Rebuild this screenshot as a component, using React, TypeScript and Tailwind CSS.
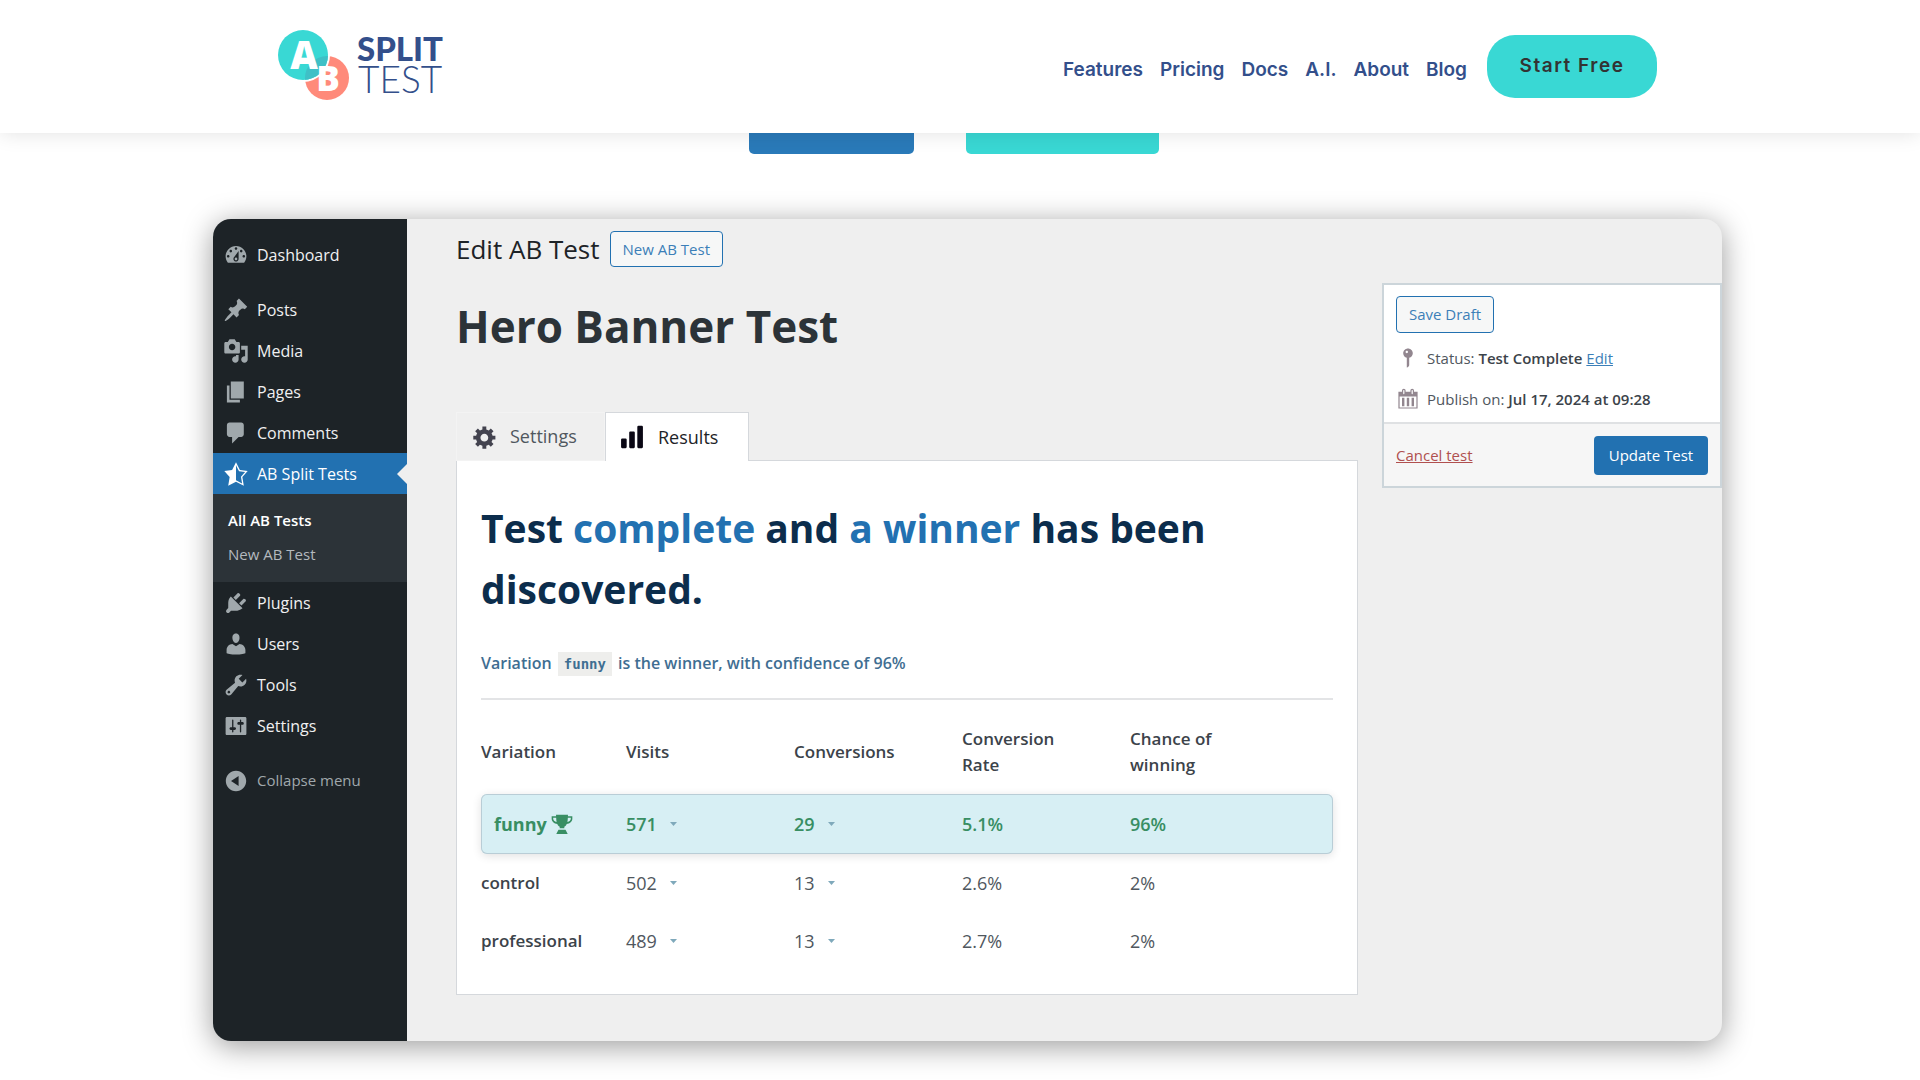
import type { ReactNode } from "react";

const paths = {
  dashboard:
    "M3.76 16h12.48c1.1-1.37 1.76-3.11 1.76-5 0-4.42-3.58-8-8-8s-8 3.58-8 8c0 1.89.66 3.63 1.76 5zM10 4c.55 0 1 .45 1 1s-.45 1-1 1-1-.45-1-1 .45-1 1-1zM6 6c.55 0 1 .45 1 1s-.45 1-1 1-1-.45-1-1 .45-1 1-1zm8 0c.55 0 1 .45 1 1s-.45 1-1 1-1-.45-1-1 .45-1 1-1zm-5.37 5.55L12 7v6c0 1.1-.9 2-2 2s-2-.9-2-2c0-.57.24-1.08.63-1.45zM4 10c.55 0 1 .45 1 1s-.45 1-1 1-1-.45-1-1 .45-1 1-1zm12 0c.55 0 1 .45 1 1s-.45 1-1 1-1-.45-1-1 .45-1 1-1zm-5 3c0-.55-.45-1-1-1s-1 .45-1 1 .45 1 1 1 1-.45 1-1z",
  posts:
    "M10.44 3.02l1.82-1.82 6.36 6.35-1.83 1.82c-1.05-.68-2.48-.57-3.41.36l-.75.75c-.92.93-1.04 2.35-.35 3.41l-1.83 1.82-2.41-2.41-2.8 2.79c-.42.42-3.38 2.71-3.8 2.29s1.86-3.39 2.28-3.81l2.79-2.79L4.1 9.36l1.83-1.82c1.05.69 2.48.57 3.4-.36l.75-.75c.93-.92 1.05-2.35.36-3.41z",
  media:
    "M13 11V4c0-.55-.45-1-1-1h-1.67L9 1H5L3.67 3H2c-.55 0-1 .45-1 1v7c0 .55.45 1 1 1h10c.55 0 1-.45 1-1zM7 4.5c1.38 0 2.5 1.12 2.5 2.5S8.38 9.5 7 9.5 4.5 8.38 4.5 7 5.62 4.5 7 4.5zM14 6h5v10.5c0 1.38-1.12 2.5-2.5 2.5S14 17.88 14 16.5s1.12-2.5 2.5-2.5c.17 0 .34.02.5.05V9h-3V6zm-4 8.05V13h2v3.5c0 1.38-1.12 2.5-2.5 2.5S7 17.88 7 16.5 8.12 14 9.5 14c.17 0 .34.02.5.05z",
  pages: "M6 15V2h10v13H6zm-1 1h8v2H3V5h2v11z",
  comments:
    "M5 2h9c1.1 0 2 .9 2 2v7c0 1.1-.9 2-2 2h-2l-5 5v-5H5c-1.1 0-2-.9-2-2V4c0-1.1.9-2 2-2z",
  starHalf:
    "M10 1L7 7l-6 .75 4.13 4.62L4 19l6-3 6 3-1.12-6.63L19 7.75 13 7zm0 2.24l2.34 4.69 4.65.58-3.18 3.56.87 5.15L10 14.88V3.24z",
  plugins:
    "M13.11 4.36L9.87 7.6 8 5.73l3.24-3.24c.35-.34 1.05-.2 1.56.32.52.51.66 1.21.31 1.55zm-8 1.77l.91-1.12 9.01 9.01-1.19.84c-.71.71-2.63 1.16-3.82 1.16H6.14L4.9 17.26c-.59.59-1.54.59-2.12 0-.59-.58-.59-1.53 0-2.12l1.24-1.24v-3.88c0-1.13.4-3.19 1.09-3.89zm7.26 3.97l3.24-3.24c.34-.35 1.04-.21 1.55.31.52.51.66 1.21.31 1.55l-3.24 3.25z",
  users:
    "M10 9.25c-2.27 0-2.73-3.44-2.73-3.44C7 4.02 7.82 2 9.97 2c2.16 0 2.98 2.02 2.71 3.81 0 0-.41 3.44-2.68 3.44zm0 2.57L12.72 10c2.39 0 4.52 2.33 4.52 4.53v2.49s-3.65 1.13-7.24 1.13c-3.65 0-7.24-1.13-7.24-1.13v-2.49c0-2.25 1.94-4.48 4.47-4.48z",
  tools:
    "M16.68 9.77c-1.34 1.34-3.3 1.67-4.95.99l-5.41 6.52c-.99.99-2.59.99-3.58 0s-.99-2.59 0-3.57l6.52-5.42c-.68-1.65-.35-3.61.99-4.95 1.28-1.28 3.12-1.62 4.72-1.06l-2.89 2.89 2.82 2.82 2.86-2.87c.53 1.58.18 3.39-1.08 4.65zM3.81 16.21c.4.39 1.04.39 1.43 0 .4-.4.4-1.04 0-1.43-.39-.4-1.03-.4-1.43 0-.39.39-.39 1.03 0 1.43z",
  settings:
    "M18 16V4c0-.55-.45-1-1-1H3c-.55 0-1 .45-1 1v12c0 .55.45 1 1 1h14c.55 0 1-.45 1-1zM8 11h1c.55 0 1 .45 1 1s-.45 1-1 1H8v1.5c0 .28-.22.5-.5.5s-.5-.22-.5-.5V13H6c-.55 0-1-.45-1-1s.45-1 1-1h1V5.5c0-.28.22-.5.5-.5s.5.22.5.5V11zm5-2h-1c-.55 0-1-.45-1-1s.45-1 1-1h1V5.5c0-.28.22-.5.5-.5s.5.22.5.5V7h1c.55 0 1 .45 1 1s-.45 1-1 1h-1v5.5c0 .28-.22.5-.5.5s-.5-.22-.5-.5V9z",
  collapse:
    "M10 2.16c4.33 0 7.84 3.51 7.84 7.84s-3.51 7.84-7.84 7.84S2.16 14.33 2.16 10 5.71 2.16 10 2.16zm2 11.72V6.12L6.18 9.97z",
  gear: "M18 12h-2.18c-.17.7-.44 1.35-.81 1.93l1.54 1.54-2.1 2.1-1.54-1.54c-.58.36-1.23.63-1.91.79V19H8v-2.18c-.68-.16-1.33-.43-1.91-.79l-1.54 1.54-2.12-2.12 1.54-1.54c-.36-.58-.63-1.23-.79-1.91H1V9.03h2.17c.16-.7.44-1.35.8-1.94L2.43 5.55l2.1-2.1 1.54 1.54c.58-.37 1.24-.64 1.93-.81V2h3v2.18c.68.16 1.33.43 1.91.79l1.54-1.54 2.12 2.12-1.54 1.54c.36.59.64 1.24.8 1.94H18V12zm-8.5 1.5c1.66 0 3-1.34 3-3s-1.34-3-3-3-3 1.34-3 3 1.34 3 3 3z",
  bars: "M3 11h2.400q.8 0 .8.8v5.400q0 .8-.8.8H3q-.8 0-.8-.8v-5.400q0-.8.8-.8zM8.800 6h2.400q.8 0 .8.8v10.400q0 .8-.8.8H8.800q-.8 0-.8-.8V6.800q0-.8.8-.8zM14.600 2H17q.8 0 .8.8v14.400q0 .8-.8.8h-2.400q-.8 0-.8-.8V2.800q0-.8.8-.8z",
  pin: "M14 6c0 1.86-1.28 3.41-3 3.86V16c0 1-2 2-2 2V9.860c-1.720-.45-3-2-3-3.860 0-2.210 1.790-4 4-4s4 1.790 4 4zM8 5c0 .55.45 1 1 1s1-.45 1-1-.45-1-1-1-1 .45-1 1z",
  calendar:
    "M15 4h3v14H2V4h3V3c0-.83.67-1.5 1.5-1.5S8 2.17 8 3v1h4V3c0-.83.67-1.5 1.5-1.5S15 2.17 15 3v1zM6 3v2.5c0 .28.22.5.5.5s.5-.22.5-.5V3c0-.28-.22-.5-.5-.5S6 2.72 6 3zm7 0v2.5c0 .28.22.5.5.5s.5-.22.5-.5V3c0-.28-.22-.5-.5-.5s-.5.22-.5.5zm4 14V8H3v9h14zM7 16V9H5v7h2zm4 0V9H9v7h2zm4 0V9h-2v7h2z",
  trophy:
    "M4.600 1.500h10.800V3H19.400v2.200c0 2.600-2.300 4.300-5.100 4.900-.6 1.200-1.200 2-2.200 2.500v1.200H7.900v-1.200c-1-.5-1.600-1.300-2.200-2.500C2.900 9.500.6 7.800.6 5.200V3h4zM4.700 4.300H2v.9c0 1.400 1.200 2.400 3.100 3-.2-1.200-.4-2.500-.4-3.900zm10.600 0c0 1.400-.2 2.700-.4 3.900 1.900-.6 3.100-1.600 3.100-3v-.9zM6.800 15.200h6.400l2 3.800H4.800z",
};

type IconName = keyof typeof paths;

const menu: { label: string; icon: IconName }[][] = [
  [{ label: "Dashboard", icon: "dashboard" }],
  [
    { label: "Posts", icon: "posts" },
    { label: "Media", icon: "media" },
    { label: "Pages", icon: "pages" },
    { label: "Comments", icon: "comments" },
  ],
  [
    { label: "Plugins", icon: "plugins" },
    { label: "Users", icon: "users" },
    { label: "Tools", icon: "tools" },
    { label: "Settings", icon: "settings" },
  ],
];

const rows = [
  { name: "funny", visits: "571", conversions: "29", rate: "5.1%", chance: "96%", winner: true },
  { name: "control", visits: "502", conversions: "13", rate: "2.6%", chance: "2%", winner: false },
  { name: "professional", visits: "489", conversions: "13", rate: "2.7%", chance: "2%", winner: false },
];

const navLinks = ["Features", "Pricing", "Docs", "A.I.", "About", "Blog"];

function Icon({ name, className }: { name: IconName; className: string }) {
  return (
    <svg viewBox="0 0 20 20" fill="currentColor" fillRule="evenodd" aria-hidden="true" className={className}>
      <path d={paths[name]} />
    </svg>
  );
}

function Logo() {
  return (
    <svg width="170" height="84" viewBox="0 -6 170 84" role="img">
      <circle cx="49" cy="48" r="22" fill="#ff8a7a" />
      <circle cx="25" cy="25" r="27" fill="#fff" />
      <circle cx="25" cy="25" r="25" fill="#39d8d4" />
      <clipPath id="lens">
        <circle cx="25" cy="25" r="25" />
      </clipPath>
      <circle cx="49" cy="48" r="22" fill="#3fc0c6" clipPath="url(#lens)" />
      <text x="26" y="39" textAnchor="middle" fontFamily="Open Sans" fontWeight="800" fontSize="38" fill="#fff">
        A
      </text>
      <text x="50" y="61" textAnchor="middle" fontFamily="Open Sans" fontWeight="800" fontSize="35" fill="#fff">
        B
      </text>
      <text x="79" y="31" fontFamily="Lato" fontWeight="900" fontSize="33" fill="#334f8b">
        SPLIT
      </text>
      <text x="80" y="63" fontFamily="Lato" fontWeight="300" fontSize="37" fill="#334f8b">
        TEST
      </text>
    </svg>
  );
}

function Header() {
  return (
    <header className="relative z-10 flex h-[133px] items-center bg-white pr-[263px] pb-px pl-[278px] font-[Inter,sans-serif] shadow-[0_0_20px_rgba(0,0,0,0.12)]">
      <a href="#">
        <Logo />
      </a>
      <nav className="ml-auto flex items-center gap-[17px] pt-[9px] text-[19px] font-semibold text-[#334f8b]">
        {navLinks.map((link) => (
          <a key={link} href="#">
            {link}
          </a>
        ))}
      </nav>
      <a
        href="#"
        className="ml-5 flex h-[63px] w-[170px] items-center justify-center rounded-[28px] bg-[#39d8d4] text-[19px] font-semibold tracking-[1.5px] text-[#333]"
      >
        Start Free
      </a>
    </header>
  );
}

function MenuItem({ icon, children }: { icon: IconName; children: ReactNode }) {
  return (
    <a href="#" className="flex h-[41px] items-center gap-2 pl-[10px] text-[#f0f0f1]">
      <Icon name={icon} className="size-[26px] text-[#a0a8ac]" />
      {children}
    </a>
  );
}

function Sidebar() {
  const [top, content, system] = menu;

  return (
    <aside className="w-[194px] shrink-0 bg-[#1d2327] pt-[15px] text-[16px]">
      <nav>
        {top.map(({ label, icon }) => (
          <MenuItem key={label} icon={icon}>
            {label}
          </MenuItem>
        ))}
        <div className="pt-[14px]">
          {content.map(({ label, icon }) => (
            <MenuItem key={label} icon={icon}>
              {label}
            </MenuItem>
          ))}
        </div>
        <a href="#" className="flex h-[41px] items-center gap-2 bg-[#2271b1] pl-[10px] text-white">
          <Icon name="starHalf" className="size-[26px]" />
          AB Split Tests
          <svg width="10" height="20" viewBox="0 0 10 20" aria-hidden="true" className="ml-auto text-[#efefef]">
            <path d="M10 0v20L0 10z" fill="currentColor" />
          </svg>
        </a>
        <div className="flex h-[88px] flex-col bg-[#2c3338] pt-[9px] pl-[15px] text-[15px] leading-[34px]">
          <a href="#" className="font-semibold text-white">
            All AB Tests
          </a>
          <a href="#" className="text-[#b4b9be]">
            New AB Test
          </a>
        </div>
        {system.map(({ label, icon }) => (
          <MenuItem key={label} icon={icon}>
            {label}
          </MenuItem>
        ))}
      </nav>
      <button type="button" className="mt-[14px] flex h-[41px] items-center gap-2 pl-[10px] text-[15px] text-[#a0a8ac]">
        <Icon name="collapse" className="size-[26px]" />
        Collapse menu
      </button>
    </aside>
  );
}

function Caret() {
  return (
    <svg width="7" height="4" viewBox="0 0 7 4" aria-hidden="true">
      <path d="M0 0h7L3.500 4z" fill="#7fa9bb" />
    </svg>
  );
}

function ResultsTable() {
  const columns = "grid grid-cols-[145px_168px_168px_168px_1fr] items-center";

  return (
    <table className="mt-[9px] block text-left text-[18px] text-[#50575e]">
      <thead className="block">
        <tr className={`${columns} h-[85px] text-[17px] leading-[26px] text-[#3c434a]`}>
          <th className="font-semibold">Variation</th>
          <th className="font-semibold">Visits</th>
          <th className="font-semibold">Conversions</th>
          <th className="w-[110px] font-semibold">Conversion Rate</th>
          <th className="w-[110px] font-semibold">Chance of winning</th>
        </tr>
      </thead>
      <tbody className="block">
        {rows.map((row) => (
          <tr
            key={row.name}
            className={
              row.winner
                ? `${columns} h-[60px] rounded-md bg-[#d7eff4] font-semibold text-[#388e63] shadow-[0_2px_10px_rgba(0,0,0,0.12)] ring-1 ring-[#b9cdd6] ring-inset`
                : `${columns} h-[58px]`
            }
          >
            <th
              className={
                row.winner ? "flex items-center gap-1 pl-[13px] font-bold" : "text-[17px] font-semibold text-[#3c434a]"
              }
            >
              {row.name}
              {row.winner && <Icon name="trophy" className="size-[22px]" />}
            </th>
            <td>
              <span className="flex items-center gap-[13px]">
                {row.visits}
                <Caret />
              </span>
            </td>
            <td>
              <span className="flex items-center gap-[13px]">
                {row.conversions}
                <Caret />
              </span>
            </td>
            <td>{row.rate}</td>
            <td>{row.chance}</td>
          </tr>
        ))}
      </tbody>
    </table>
  );
}

function Results() {
  return (
    <section className="border border-[#d5d8dc] bg-white px-6 pt-9 pb-6">
      <h2 className="text-[39px] leading-[61px] font-bold text-[#0c2d4c]">
        Test <span className="text-[#2271b1]">complete</span> and <span className="text-[#2271b1]">a winner</span> has
        been <span>discovered.</span>
      </h2>
      <p className="mt-[31px] border-b-2 border-[#e3e4e6] pb-[22px] text-[16px] leading-[26px] font-semibold text-[#3f6e92]">
        Variation{" "}
        <code className="mx-[2px] inline-block bg-[#eeeeec] px-[6px] font-['DejaVu_Sans_Mono',monospace] text-[14px] leading-6">
          funny
        </code>{" "}
        is the winner, with confidence of 96%
      </p>
      <ResultsTable />
    </section>
  );
}

function Editor() {
  return (
    <main className="flex-1 pt-3 pb-[46px] pl-[49px]">
      <div className="flex items-center gap-[10px]">
        <h1 className="text-[26px] leading-9 text-[#1d2327]">Edit AB Test</h1>
        <button
          type="button"
          className="h-9 rounded-[4px] border border-[#2271b1] bg-[#f6f7f7] px-3 text-[15px] text-[#3c7fb8]"
        >
          New AB Test
        </button>
      </div>
      <h2 className="mt-[26px] text-[44px] leading-[66px] font-bold text-[#2c3338]">Hero Banner Test</h2>
      <div className="mt-[53px] -mb-px flex text-[18px]">
        <button
          type="button"
          className="flex h-[49px] w-[149px] items-center gap-3 border border-[#f3f3f3] pl-[15px] text-[#50575e]"
        >
          <Icon name="gear" className="size-[26px] text-[#43434f]" />
          Settings
        </button>
        <button
          type="button"
          className="flex h-[49px] w-[144px] items-center gap-3 border border-b-0 border-[#d5d8dc] bg-white pl-3 text-[#1d2327]"
        >
          <Icon name="bars" className="size-[28px] text-[#0a0714]" />
          Results
        </button>
      </div>
      <Results />
    </main>
  );
}

function PublishBox() {
  return (
    <aside className="mt-16 ml-6 h-[205px] w-[340px] shrink-0 border-2 border-[#ccd5da] bg-white text-[15px] text-[#50575e]">
      <div className="h-[139px] border-b-2 border-[#dfe1e3] px-3 pt-[11px]">
        <button
          type="button"
          className="h-[37px] w-[98px] rounded-[4px] border border-[#2271b1] bg-[#f6f7f7] text-[#3c7fb8]"
        >
          Save Draft
        </button>
        <p className="mt-[5px] flex h-10 items-center gap-[7px]">
          <Icon name="pin" className="size-6 text-[#92868f]" />
          <span>
            Status: <b className="font-semibold text-[#3c434a]">Test Complete</b>{" "}
            <a href="#" className="text-[#3c7fb8] underline">
              Edit
            </a>
          </span>
        </p>
        <p className="flex h-[42px] items-center gap-[7px]">
          <Icon name="calendar" className="size-6 text-[#92868f]" />
          <span>
            Publish on: <b className="font-semibold text-[#3c434a]">Jul 17, 2024 at 09:28</b>
          </span>
        </p>
      </div>
      <div className="flex h-[62px] items-center justify-between bg-[#f6f6f6] px-3">
        <a href="#" className="text-[#b0504f] underline">
          Cancel test
        </a>
        <button type="button" className="h-[39px] w-[114px] rounded-[4px] bg-[#2271b1] font-medium text-white">
          Update Test
        </button>
      </div>
    </aside>
  );
}

export default function App() {
  return (
    <div className="min-h-screen bg-white">
      <Header />
      <div className="flex justify-center gap-[52px] pr-[12px]">
        <div className="h-[21px] w-[165px] rounded-b-[5px] bg-[#2a7ab9]" />
        <div className="h-[21px] w-[193px] rounded-b-[5px] bg-[#39d8d4]" />
      </div>
      <div className="mt-[65px] mr-[198px] mb-[39px] ml-[213px] flex overflow-hidden rounded-[18px] bg-[#efefef] font-['Open_Sans',sans-serif] shadow-[0_5px_30px_rgba(0,0,0,0.4)]">
        <Sidebar />
        <Editor />
        <PublishBox />
      </div>
    </div>
  );
}
